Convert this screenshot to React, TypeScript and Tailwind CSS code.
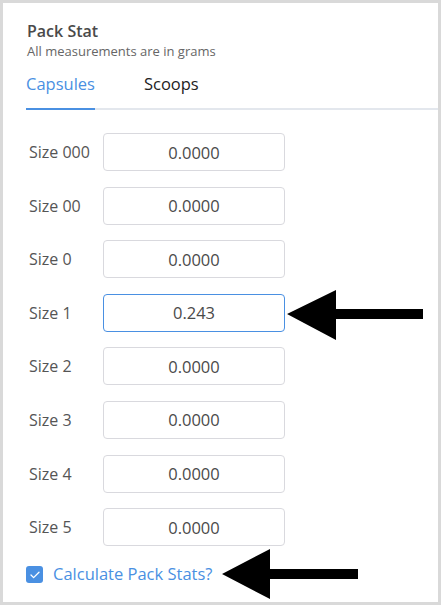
import { useState } from 'react';

const sizes = ['000', '00', '0', '1', '2', '3', '4', '5'];

export default function App() {
  const [tab, setTab] = useState('capsules');
  const [values, setValues] = useState<Record<string, string>>({ '1': '0.243' });
  const [calc, setCalc] = useState(true);

  return (
    <div className="relative w-[444px] h-[606px] bg-white font-['Open_Sans',sans-serif]">
      <div className="w-[441px] h-[605px] border-[3px] border-[#d9d9d9] bg-white flex flex-col">
        {/* header */}
        <div className="pl-[24px] pt-[18px]">
          <h1 className="text-[16px] leading-[20px] font-semibold text-[#4a4a4a]">Pack Stat</h1>
          <p className="text-[13px] leading-[16px] text-[#666] mt-[2px]">All measurements are in grams</p>
        </div>

        {/* tabs */}
        <div className="flex items-end mt-[15px] ml-[23px] border-b-2 border-[#e3e7ed]">
          <button
            onClick={() => setTab('capsules')}
            className={`-mb-[2px] pb-[14px] text-[16.5px] leading-[20px] border-b-2 ${tab === 'capsules' ? 'text-[#4a90e2] border-[#4a90e2]' : 'text-[#222] border-transparent'}`}
          >
            Capsules
          </button>
          <button
            onClick={() => setTab('scoops')}
            className={`-mb-[2px] pb-[14px] ml-[49px] text-[16.5px] leading-[20px] border-b-2 ${tab === 'scoops' ? 'text-[#4a90e2] border-[#4a90e2]' : 'text-[#222] border-transparent'}`}
          >
            Scoops
          </button>
        </div>

        {/* size rows */}
        <div className="flex flex-col gap-[15.6px] mt-[23px] pl-[26px]">
          {sizes.map((s) => (
            <div key={s} className="flex items-center">
              <span className="w-[74px] text-[16px] text-[#555]">Size {s}</span>
              <input
                value={values[s] ?? '0.0000'}
                onChange={(e) => setValues({ ...values, [s]: e.target.value })}
                className={`w-[182px] h-[38px] rounded-[4px] border text-center text-[16.5px] text-[#4a4a4a] outline-none ${s === '1' ? 'border-[#4a90e2]' : 'border-[#d9d9de]'}`}
              />
            </div>
          ))}
        </div>

        {/* checkbox */}
        <label className="flex items-center mt-[16px] ml-[23px] cursor-pointer">
          <input type="checkbox" checked={calc} onChange={() => setCalc(!calc)} className="hidden" />
          <span className={`w-[17px] h-[17px] rounded-[3px] flex items-center justify-center ${calc ? 'bg-[#4a90e2]' : 'border border-[#ccc]'}`}>
            {calc && (
              <svg width="10" height="8" viewBox="0 0 10 8" fill="none">
                <path d="M1 4l2.6 2.6L9 1.2" stroke="white" strokeWidth="1.3" strokeLinecap="round" strokeLinejoin="round" />
              </svg>
            )}
          </span>
          <span className="ml-[10px] text-[16.5px] text-[#4a90e2]">Calculate Pack Stats?</span>
        </label>
      </div>

      {/* annotation arrows */}
      <svg className="absolute left-0 top-0 pointer-events-none" width="444" height="606">
        <polygon points="287,314 336,290 336,309 423,309 423,319 336,319 336,340" fill="black" />
        <polygon points="222,574 270,549 270,569 358,569 358,579 270,579 270,599" fill="black" />
      </svg>
    </div>
  );
}
